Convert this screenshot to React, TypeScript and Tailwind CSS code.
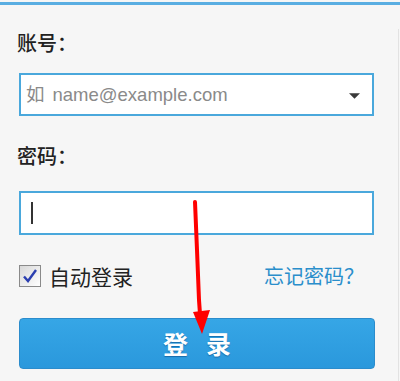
import { useState } from "react";

const App = () => {
  const [remember, setRemember] = useState(true);

  return (
    <div className="relative w-[400px] h-[381px] overflow-hidden bg-[#f6f6f6] font-['Noto_Sans_CJK_SC','Noto_Sans',sans-serif] text-[#222]">
      {/* top accent line */}
      <div className="mt-[2px] h-[3px] w-full bg-[#5aaee2]" />

      <div className="w-[399px] h-full border-r border-[#e2e2e2] pl-[17px]">
        {/* account */}
        <div className="mt-[24px] text-[20px] leading-[28px] font-medium">账号：</div>
        <div className="mt-[16px] ml-[2px] flex h-[43px] w-[355px] items-center justify-between border-2 border-[#4aa8dc] bg-white pl-[5px] pr-[12px]">
          <span className="text-[18.5px] text-[#8a8a8a] font-['Liberation_Sans','Noto_Sans_CJK_SC',sans-serif]">
            <span className="font-['Noto_Sans_CJK_SC',sans-serif] mr-[8px]">如</span>name@example.com
          </span>
          <svg width="11" height="8" viewBox="0 0 12 8" className="mt-[2px]">
            <polygon points="0,1 12,1 6,7" fill="#3a3a3a" />
          </svg>
        </div>

        {/* password */}
        <div className="mt-[26px] text-[20px] leading-[28px] font-medium">密码：</div>
        <div className="mt-[21px] ml-[2px] flex h-[44px] w-[355px] items-center border-2 border-[#4aa8dc] bg-white pl-[10px]">
          <div className="h-[22px] w-[2px] bg-[#333]" />
        </div>

        {/* options row */}
        <div className="mt-[27px] flex h-[28px] w-[347px] items-center justify-between">
          <label className="flex items-center gap-[8px] cursor-pointer" onClick={() => setRemember(!remember)}>
            <span className="ml-[2px] flex h-[22px] w-[22px] items-center justify-center border border-[#8a8a8a] bg-gradient-to-br from-[#d8d8d8] to-[#ffffff]">
              {remember && (
                <svg width="16" height="16" viewBox="0 0 16 16">
                  <path d="M2 8.5 L6 13 L14 2" fill="none" stroke="#2b3fb0" strokeWidth="2.4" />
                </svg>
              )}
            </span>
            <span className="text-[21px] leading-[28px]">自动登录</span>
          </label>
          <a className="text-[20px] leading-[28px] text-[#2a8ecb]">忘记密码？</a>
        </div>

        {/* submit */}
        <button className="mt-[28px] ml-[2px] flex h-[51px] w-[356px] items-center justify-center rounded-[4px] border border-[#2b8ccc] bg-gradient-to-b from-[#36a6e6] to-[#2a98dc] text-[25px] font-bold text-white tracking-[18px] pl-[18px] [text-shadow:0_1px_1px_rgba(0,60,120,0.5)]">
          登录
        </button>
      </div>

      {/* red annotation arrow */}
      <svg className="absolute left-0 top-0 pointer-events-none" width="400" height="381">
        <polyline points="195,202 197,250 199,300 200,314" fill="none" stroke="#ff0000" strokeWidth="4" strokeLinecap="round" />
        <polygon points="193,312 210,310 202,334" fill="#ff0000" />
      </svg>
    </div>
  );
};

export default App;
